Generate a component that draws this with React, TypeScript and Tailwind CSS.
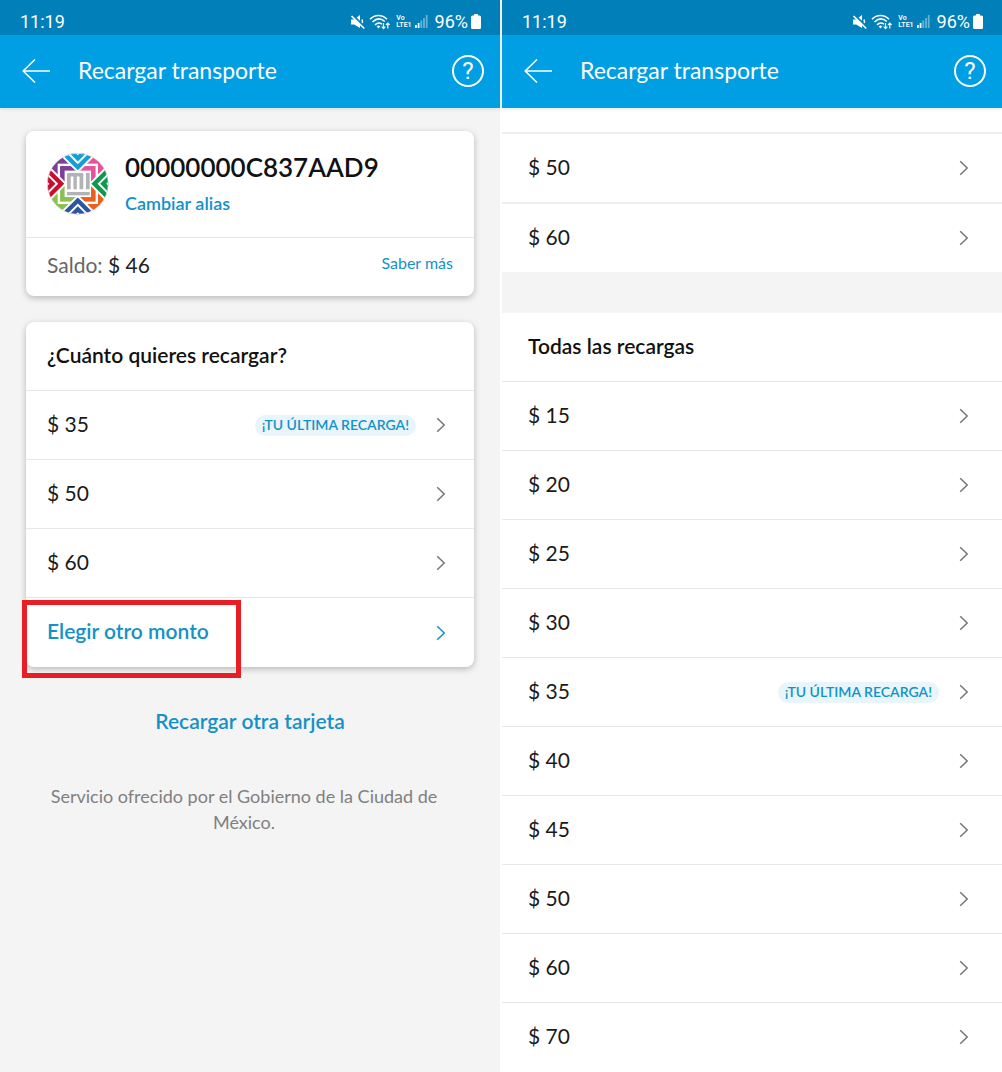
import type { ReactNode } from 'react';

function MutedIcon() {
  return (
    <svg className="h-4 w-4" viewBox="0 0 16 16" fill="none" aria-hidden="true">
      <path d="M1 5.500h3.200L10 1v13L4.200 10.500H1z" fill="#fff" />
      <path d="M2.500 1l13 12.500" stroke="#007fb8" strokeWidth="2" />
      <path d="M1.500 2l12.800 12.500" stroke="#fff" strokeWidth="1.700" />
      <path d="M11.800 5.500c.9 1.200.9 2.300.5 3.500" stroke="#fff" strokeWidth="1.500" />
    </svg>
  );
}

function WifiIcon() {
  return (
    <svg className="h-4 w-[22px]" viewBox="0 0 22 16" fill="none" stroke="#fff" aria-hidden="true">
      <path d="M1 5.200C6 .3 13 .3 18 5.200" strokeWidth="1.600" />
      <path d="M3.500 8C7.500 4.200 12 4.200 15.800 7.500" strokeWidth="1.600" />
      <path d="M6 10.800c2.300-2.200 4.800-2.200 7-.6" strokeWidth="1.600" />
      <path d="M8 12.400a2.400 2.400 0 0 1 3 0l-1.500 1.800z" fill="#fff" strokeWidth=".5" />
      <path d="M14.500 9v5.500M12.700 12.700l1.800 1.900 1.800-1.900M18.800 14.500V9M17 10.900L18.800 9l1.800 1.900" strokeWidth="1.200" />
    </svg>
  );
}

function SignalIcon() {
  return (
    <svg className="h-[13px] w-[13px]" viewBox="0 0 13 13" fill="#fff" aria-hidden="true">
      <rect x="0" y="10" width="1.800" height="3" />
      <rect x="2.700" y="8" width="1.800" height="5" />
      <rect x="5.400" y="5.500" width="1.800" height="7.500" opacity=".4" />
      <rect x="8.100" y="3" width="1.800" height="10" opacity=".4" />
      <rect x="10.800" y="0" width="1.800" height="13" opacity=".4" />
    </svg>
  );
}

function BatteryIcon() {
  return (
    <svg className="h-[15px] w-[10px]" viewBox="0 0 10 15" fill="#fff" aria-hidden="true">
      <rect x="3" y="0" width="4" height="3" rx=".6" />
      <rect x="0" y="1.600" width="10" height="13.400" rx="1.500" />
    </svg>
  );
}

function Chevron({ className = 'text-[#757575]' }: { className?: string }) {
  return (
    <svg
      className={`h-4 w-[10px] shrink-0 ${className}`}
      viewBox="0 0 10 16"
      fill="none"
      stroke="currentColor"
      strokeWidth="1.500"
      aria-hidden="true"
    >
      <path d="M1.200 1.200L8.200 8l-7 6.800" />
    </svg>
  );
}

// One side of the emblem, drawn for the top and rotated for the other three
function EmblemSide({ color, angle }: { color: string; angle: number }) {
  return (
    <g transform={`rotate(${angle} 91 91)`}>
      <path d="M26-6L91 59l65-65z" fill="#fff" />
      <path d="M34-6L91 51l57-57z" fill={color} />
      <path d="M52-6L91 33l39-39z" fill="#fff" />
      <path d="M60-6L91 25l31-31z" fill={color} />
      <path d="M78-6L91 7l13-13z" fill="#fff" />
    </g>
  );
}

function MobilityLogo() {
  return (
    <svg className="h-[62px] w-[62px] shrink-0" viewBox="0 0 183 183" aria-hidden="true">
      <defs>
        <clipPath id="emblem">
          <circle cx="91" cy="91" r="90" />
        </clipPath>
      </defs>
      <g clipPath="url(#emblem)">
        <rect width="91" height="91" fill="#7d3f98" />
        <rect x="91" width="92" height="91" fill="#e8529b" />
        <rect y="91" width="91" height="92" fill="#8cc152" />
        <rect x="91" y="91" width="92" height="92" fill="#e9601f" />
        <rect x="35" y="35" width="112" height="112" fill="none" stroke="#fff" strokeWidth="7" />
        <EmblemSide color="#12a0d7" angle={0} />
        <EmblemSide color="#0d9a50" angle={90} />
        <EmblemSide color="#2b55a2" angle={180} />
        <EmblemSide color="#c8102e" angle={270} />
        <rect x="52" y="52" width="78" height="78" fill="#fff" />
      </g>
      <g fill="#b1b3b4">
        <rect x="59" y="59" width="48" height="10" rx="3" />
        <rect x="59" y="61" width="11" height="46" />
        <rect x="78" y="61" width="10" height="46" />
        <rect x="96" y="61" width="11" height="46" />
        <rect x="115" y="59" width="11" height="48" />
        <rect x="59" y="115" width="67" height="10" />
      </g>
      <circle cx="91" cy="91" r="90" fill="none" stroke="#e8e8e8" strokeWidth="2" />
    </svg>
  );
}

function Header() {
  return (
    <header className="relative text-white shadow-[0_1px_4px_rgba(0,0,0,0.1)]">
      <div className="flex h-[35px] items-center justify-between bg-[#007fb8] pl-5 pr-[19px] pt-2 font-[Roboto,sans-serif] text-lg leading-6">
        <span>11:19</span>
        <div className="flex items-center gap-[3px]">
          <MutedIcon />
          <WifiIcon />
          <span className="ml-0.5 text-[7px] font-semibold leading-[7px]">
            Vo
            <br />
            LTE1
          </span>
          <SignalIcon />
          <span className="ml-1">96%</span>
          <BatteryIcon />
        </div>
      </div>
      <div className="flex h-[73px] items-center bg-[#009ee3] pb-0.5 pl-[22px] pr-4">
        <button type="button" aria-label="Volver">
          <svg className="h-6 w-7" viewBox="0 0 28 24" fill="none" stroke="#fff" strokeWidth="1.500" aria-hidden="true">
            <path d="M28 12H1.500M13 .5L1.200 12 13 23.500" />
          </svg>
        </button>
        <h1 className="ml-7 flex-1 pb-0.5 text-[23px] leading-7">Recargar transporte</h1>
        <button
          type="button"
          aria-label="Ayuda"
          className="flex h-8 w-8 items-center justify-center rounded-full border-2 border-white font-[Roboto,sans-serif] text-2xl leading-7"
        >
          ?
        </button>
      </div>
    </header>
  );
}

function AmountRow({ amount, last = false }: { amount: number; last?: boolean }) {
  return (
    <button type="button" className="flex h-[68px] w-full items-center text-left text-[21px] text-[#1a1a1a]">
      <span className="flex-1 pb-0.5">$ {amount}</span>
      {last && (
        <span className="mr-5 rounded-full bg-[#e8f5fa] px-[7px] pb-0.5 text-sm font-semibold leading-[19px] text-[#1491c8]">
          ¡TU ÚLTIMA RECARGA!
        </span>
      )}
      <Chevron />
    </button>
  );
}

function Card({ children }: { children: ReactNode }) {
  return <section className="rounded-lg bg-white shadow-[0_2px_6px_rgba(0,0,0,0.25)]">{children}</section>;
}

function HomeScreen() {
  return (
    <div className="bg-[#f4f4f4]">
      <Header />
      <main className="px-[26px] pt-[23px]">
        <Card>
          <div className="flex h-[107px] items-center gap-4 border-b border-[#e6e6e6] pl-[21px]">
            <MobilityLogo />
            <div className="pb-0.5">
              <h2 className="text-[26px] font-semibold leading-8 text-[#111]">00000000C837AAD9</h2>
              <a href="#alias" className="mt-2 block text-lg font-semibold leading-6 text-[#1491c8]">
                Cambiar alias
              </a>
            </div>
          </div>
          <div className="flex h-[58px] items-center justify-between px-[21px]">
            <p className="pb-1 text-[21px] text-[#222]">
              <span className="text-[#666]">Saldo:</span> $ 46
            </p>
            <a href="#saldo" className="pb-2 text-base text-[#1491c8]">
              Saber más
            </a>
          </div>
        </Card>

        <div className="mt-[26px]">
          <Card>
            <h2 className="flex h-[68px] items-center px-[21px] pb-0.5 text-[21px] font-semibold text-[#111]">
              ¿Cuánto quieres recargar?
            </h2>
            <ul>
              {[35, 50, 60].map((amount) => (
                <li key={amount} className="border-t border-[#e6e6e6] pl-[21px] pr-7">
                  <AmountRow amount={amount} last={amount === 35} />
                </li>
              ))}
              <li className="relative border-t border-[#e6e6e6] pl-[21px] pr-7">
                <button
                  type="button"
                  className="flex h-[69px] w-full items-center justify-between text-[21px] font-semibold text-[#1491c8]"
                >
                  <span className="pb-1">Elegir otro monto</span>
                  <Chevron className="text-[#1491c8]" />
                </button>
                <span className="pointer-events-none absolute -left-1 top-0.5 h-[78px] w-[219px] border-[5px] border-[#e81d25]" />
              </li>
            </ul>
          </Card>
        </div>

        <button type="button" className="mx-auto mt-10 block text-[21px] font-semibold leading-7 text-[#1491c8]">
          Recargar otra tarjeta
        </button>
        <p className="mt-12 pl-5 pr-8 text-center text-lg leading-[26px] text-[#808080]">
          Servicio ofrecido por el Gobierno de la Ciudad de México.
        </p>
      </main>
    </div>
  );
}

function AmountsScreen() {
  return (
    <div className="bg-white">
      <Header />
      <main>
        <ul className="pt-6">
          {[50, 60].map((amount) => (
            <li key={amount} className="border-t-2 border-[#eee] pl-[26px] pr-[33px]">
              <AmountRow amount={amount} />
            </li>
          ))}
        </ul>
        <div className="h-[41px] bg-[#f4f4f4]" />
        <h2 className="flex h-[68px] items-center pb-0.5 pl-[26px] text-[21px] font-semibold text-[#111]">
          Todas las recargas
        </h2>
        <ul>
          {[15, 20, 25, 30, 35, 40, 45, 50, 60, 70].map((amount) => (
            <li key={amount} className="border-t border-[#e6e6e6] pl-[26px] pr-[33px]">
              <AmountRow amount={amount} last={amount === 35} />
            </li>
          ))}
        </ul>
      </main>
    </div>
  );
}

export default function App() {
  return (
    <div className="grid min-h-screen grid-cols-2 gap-0.5 bg-white font-[Lato,sans-serif]">
      <HomeScreen />
      <AmountsScreen />
    </div>
  );
}
